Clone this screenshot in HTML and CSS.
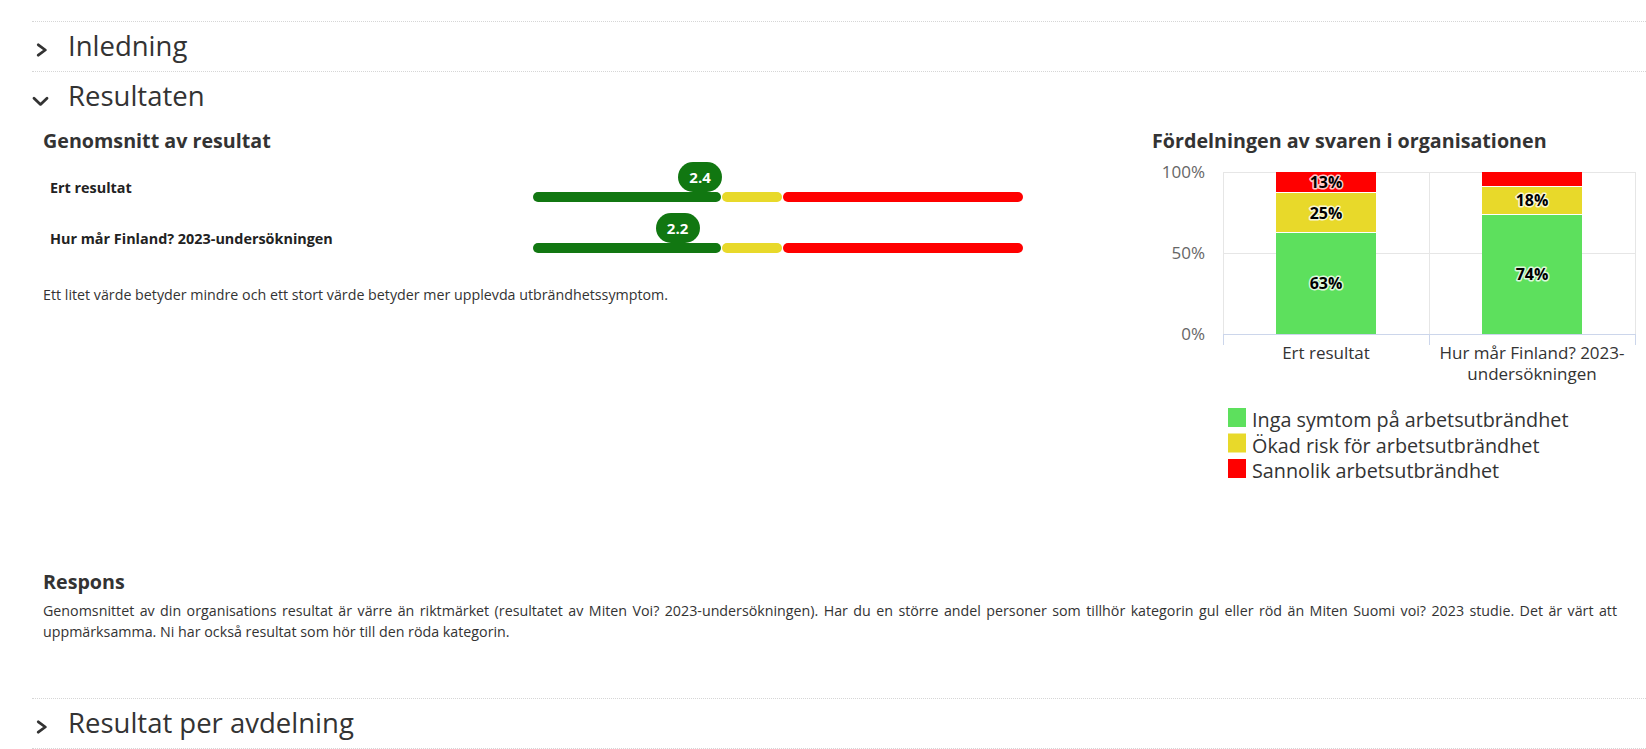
FILE: index.html
```html
<!DOCTYPE html>
<html lang="sv">
<head>
<meta charset="utf-8">
<title>Resultaten</title>
<link rel="stylesheet" href="styles.css">
</head>
<body>
<div class="accordion">
  <section class="acc-item">
    <div class="acc-header">
      <span class="chev chev-right"><svg width="12" height="14" viewBox="0 0 12 14"><polyline points="2.3,1.8 9.3,7 2.3,12.2" fill="none" stroke="#333" stroke-width="2.8" stroke-linecap="round" stroke-linejoin="round"/></svg></span>
      <h2 class="acc-title">Inledning</h2>
    </div>
  </section>

  <section class="acc-item">
    <div class="acc-header">
      <span class="chev chev-down"><svg width="17" height="11" viewBox="0 0 17 11"><polyline points="2,2.2 8.5,8.4 15,2.2" fill="none" stroke="#333" stroke-width="2.8" stroke-linecap="round" stroke-linejoin="round"/></svg></span>
      <h2 class="acc-title">Resultaten</h2>
    </div>
    <div class="acc-body">
      <div class="columns">
        <div class="col-left">
          <h4 class="block-title">Genomsnitt av resultat</h4>
          <div class="score-rows">
            <div class="score-label">Ert resultat</div>
            <div class="score-track">
              <div class="badge-lane"><span class="badge" style="left:34.1%">2.4</span></div>
              <div class="bar"><span class="seg seg-green"></span><span class="seg seg-yellow"></span><span class="seg seg-red"></span></div>
            </div>
            <div class="score-label">Hur mår Finland? 2023-undersökningen</div>
            <div class="score-track">
              <div class="badge-lane"><span class="badge" style="left:29.5%">2.2</span></div>
              <div class="bar"><span class="seg seg-green"></span><span class="seg seg-yellow"></span><span class="seg seg-red"></span></div>
            </div>
          </div>
          <p class="note">Ett litet värde betyder mindre och ett stort värde betyder mer upplevda utbrändhetssymptom.</p>
        </div>
        <div class="col-right">
          <h4 class="block-title">Fördelningen av svaren i organisationen</h4>
          <svg class="chart" width="494" height="330" viewBox="0 0 494 330">
            <g class="grid">
              <line x1="71" y1="12.5" x2="484" y2="12.5"/>
              <line x1="71" y1="93.5" x2="484" y2="93.5"/>
              <line x1="71.5" y1="12" x2="71.5" y2="174"/>
              <line x1="277.5" y1="12" x2="277.5" y2="174"/>
              <line x1="483.5" y1="12" x2="483.5" y2="174"/>
            </g>
            <g class="axis">
              <line x1="71" y1="174.5" x2="484" y2="174.5"/>
              <line x1="71.5" y1="174" x2="71.5" y2="185"/>
              <line x1="277.5" y1="174" x2="277.5" y2="185"/>
              <line x1="483.5" y1="174" x2="483.5" y2="185"/>
            </g>
            <g class="ylabels">
              <text x="53" y="18">100%</text>
              <text x="53" y="99">50%</text>
              <text x="53" y="180">0%</text>
            </g>
            <rect class="c-red" x="124" y="12" width="100" height="20"/>
            <rect class="c-yellow" x="124" y="33" width="100" height="39"/>
            <rect class="c-green" x="124" y="73" width="100" height="101"/>
            <rect class="c-red" x="330" y="12" width="100" height="14"/>
            <rect class="c-yellow" x="330" y="27" width="100" height="27"/>
            <rect class="c-green" x="330" y="55" width="100" height="119"/>
            <g class="dlabels">
              <text x="174" y="28">13%</text>
              <text x="174" y="58.5">25%</text>
              <text x="174" y="129">63%</text>
              <text x="380" y="46">18%</text>
              <text x="380" y="120">74%</text>
            </g>
            <g class="xlabels">
              <text x="174" y="199">Ert resultat</text>
              <text x="380" y="199">Hur mår Finland? 2023-</text>
              <text x="380" y="220">undersökningen</text>
            </g>
            <g class="legend">
              <rect class="c-green" x="76" y="248" width="18" height="19"/>
              <text x="100" y="267">Inga symtom på arbetsutbrändhet</text>
              <rect class="c-yellow" x="76" y="273.5" width="18" height="19"/>
              <text x="100" y="292.5">Ökad risk för arbetsutbrändhet</text>
              <rect class="c-red" x="76" y="299" width="18" height="19"/>
              <text x="100" y="318">Sannolik arbetsutbrändhet</text>
            </g>
          </svg>
        </div>
      </div>
      <h4 class="block-title respons-title">Respons</h4>
      <p class="feedback">Genomsnittet av din organisations resultat är värre än riktmärket (resultatet av Miten Voi? 2023-undersökningen). Har du en större andel personer som tillhör kategorin gul eller röd än Miten Suomi voi? 2023 studie. Det är värt att uppmärksamma. Ni har också resultat som hör till den röda kategorin.</p>
    </div>
  </section>

  <section class="acc-item last">
    <div class="acc-header">
      <span class="chev chev-right"><svg width="12" height="14" viewBox="0 0 12 14"><polyline points="2.3,1.8 9.3,7 2.3,12.2" fill="none" stroke="#333" stroke-width="2.8" stroke-linecap="round" stroke-linejoin="round"/></svg></span>
      <h2 class="acc-title">Resultat per avdelning</h2>
    </div>
  </section>
</div>
</body>
</html>
```

FILE: styles.css
```css
* { box-sizing: border-box; }

html, body {
  margin: 0;
  padding: 0;
  background: #fff;
}

body {
  font-family: "Open Sans", "Noto Sans", "Liberation Sans", sans-serif;
  color: #333;
  padding-top: 21px;
  overflow: hidden;
}

.accordion {
  margin-left: 32px;
}

.acc-item {
  border-top: 1px dotted #d6d6d6;
}

.acc-item.last {
  border-bottom: 1px dotted #d6d6d6;
}

.acc-header {
  height: 49px;
  display: flex;
  align-items: center;
  padding-bottom: 2px;
}

.chev {
  width: 36px;
  display: flex;
  margin-top: 8px;
}

.chev-right { padding-left: 4px; }
.chev-down { padding-left: 0; margin-top: 11px; }

.chev svg { display: block; }

.acc-title {
  margin: 0;
  font-size: 27.5px;
  font-weight: 400;
  line-height: 1.2;
  color: #333;
}

.acc-body {
  padding: 0 0 56px 11px;
}

.columns {
  display: grid;
  grid-template-columns: 1109px 1fr;
}

.block-title {
  margin: 8px 0 0;
  font-size: 19.7px;
  font-weight: 700;
  line-height: 24px;
  color: #333;
}

.score-rows {
  margin-top: 9px;
  display: grid;
  grid-template-columns: 490px 490px;
  row-gap: 11px;
}

.score-label {
  align-self: end;
  padding-left: 7px;
  margin-bottom: 4px;
  font-size: 14.4px;
  font-weight: 700;
  line-height: 20px;
  color: #222;
}

.score-track {
  display: flex;
  flex-direction: column;
}

.badge-lane {
  position: relative;
  height: 30px;
}

.badge {
  position: absolute;
  top: 0;
  transform: translateX(-50%);
  width: 44px;
  height: 30px;
  border-radius: 15px;
  background: #117711;
  color: #fff;
  font-size: 15px;
  font-weight: 700;
  line-height: 30px;
  text-align: center;
}

.bar {
  display: flex;
  gap: 1px;
  height: 10px;
}

.seg {
  display: block;
  height: 10px;
  border-radius: 5px;
}

.seg-green { width: 38.4%; background: #117711; }
.seg-yellow { width: 12.2%; background: #e8d92a; }
.seg-red { flex: 1; background: #ff0000; }

.note {
  margin: 32px 0 0;
  font-size: 14.25px;
  line-height: 20px;
  color: #333;
}

.chart {
  display: block;
  margin-top: 7px;
  font-family: "Open Sans", "Noto Sans", "Liberation Sans", sans-serif;
}

.grid line { stroke: #e6e6e6; stroke-width: 1; }
.axis line { stroke: #ccd6eb; stroke-width: 1; }

.ylabels text {
  font-size: 17px;
  fill: #666;
  text-anchor: end;
}

.xlabels text {
  font-size: 17px;
  fill: #333;
  text-anchor: middle;
}

.dlabels text {
  font-size: 16px;
  font-weight: 700;
  fill: #000;
  text-anchor: middle;
  stroke: rgba(255, 255, 255, 0.8);
  stroke-width: 3px;
  stroke-linejoin: round;
  paint-order: stroke;
}

.legend text {
  font-size: 19.8px;
  fill: #333;
}

.c-green { fill: #5de05d; }
.c-yellow { fill: #e8d92a; }
.c-red { fill: #ff0000; }

.respons-title {
  margin-top: 80px;
}

.feedback {
  margin: 7px 29px 0 0;
  font-size: 14.25px;
  line-height: 20.5px;
  color: #333;
  text-align: justify;
}
```
